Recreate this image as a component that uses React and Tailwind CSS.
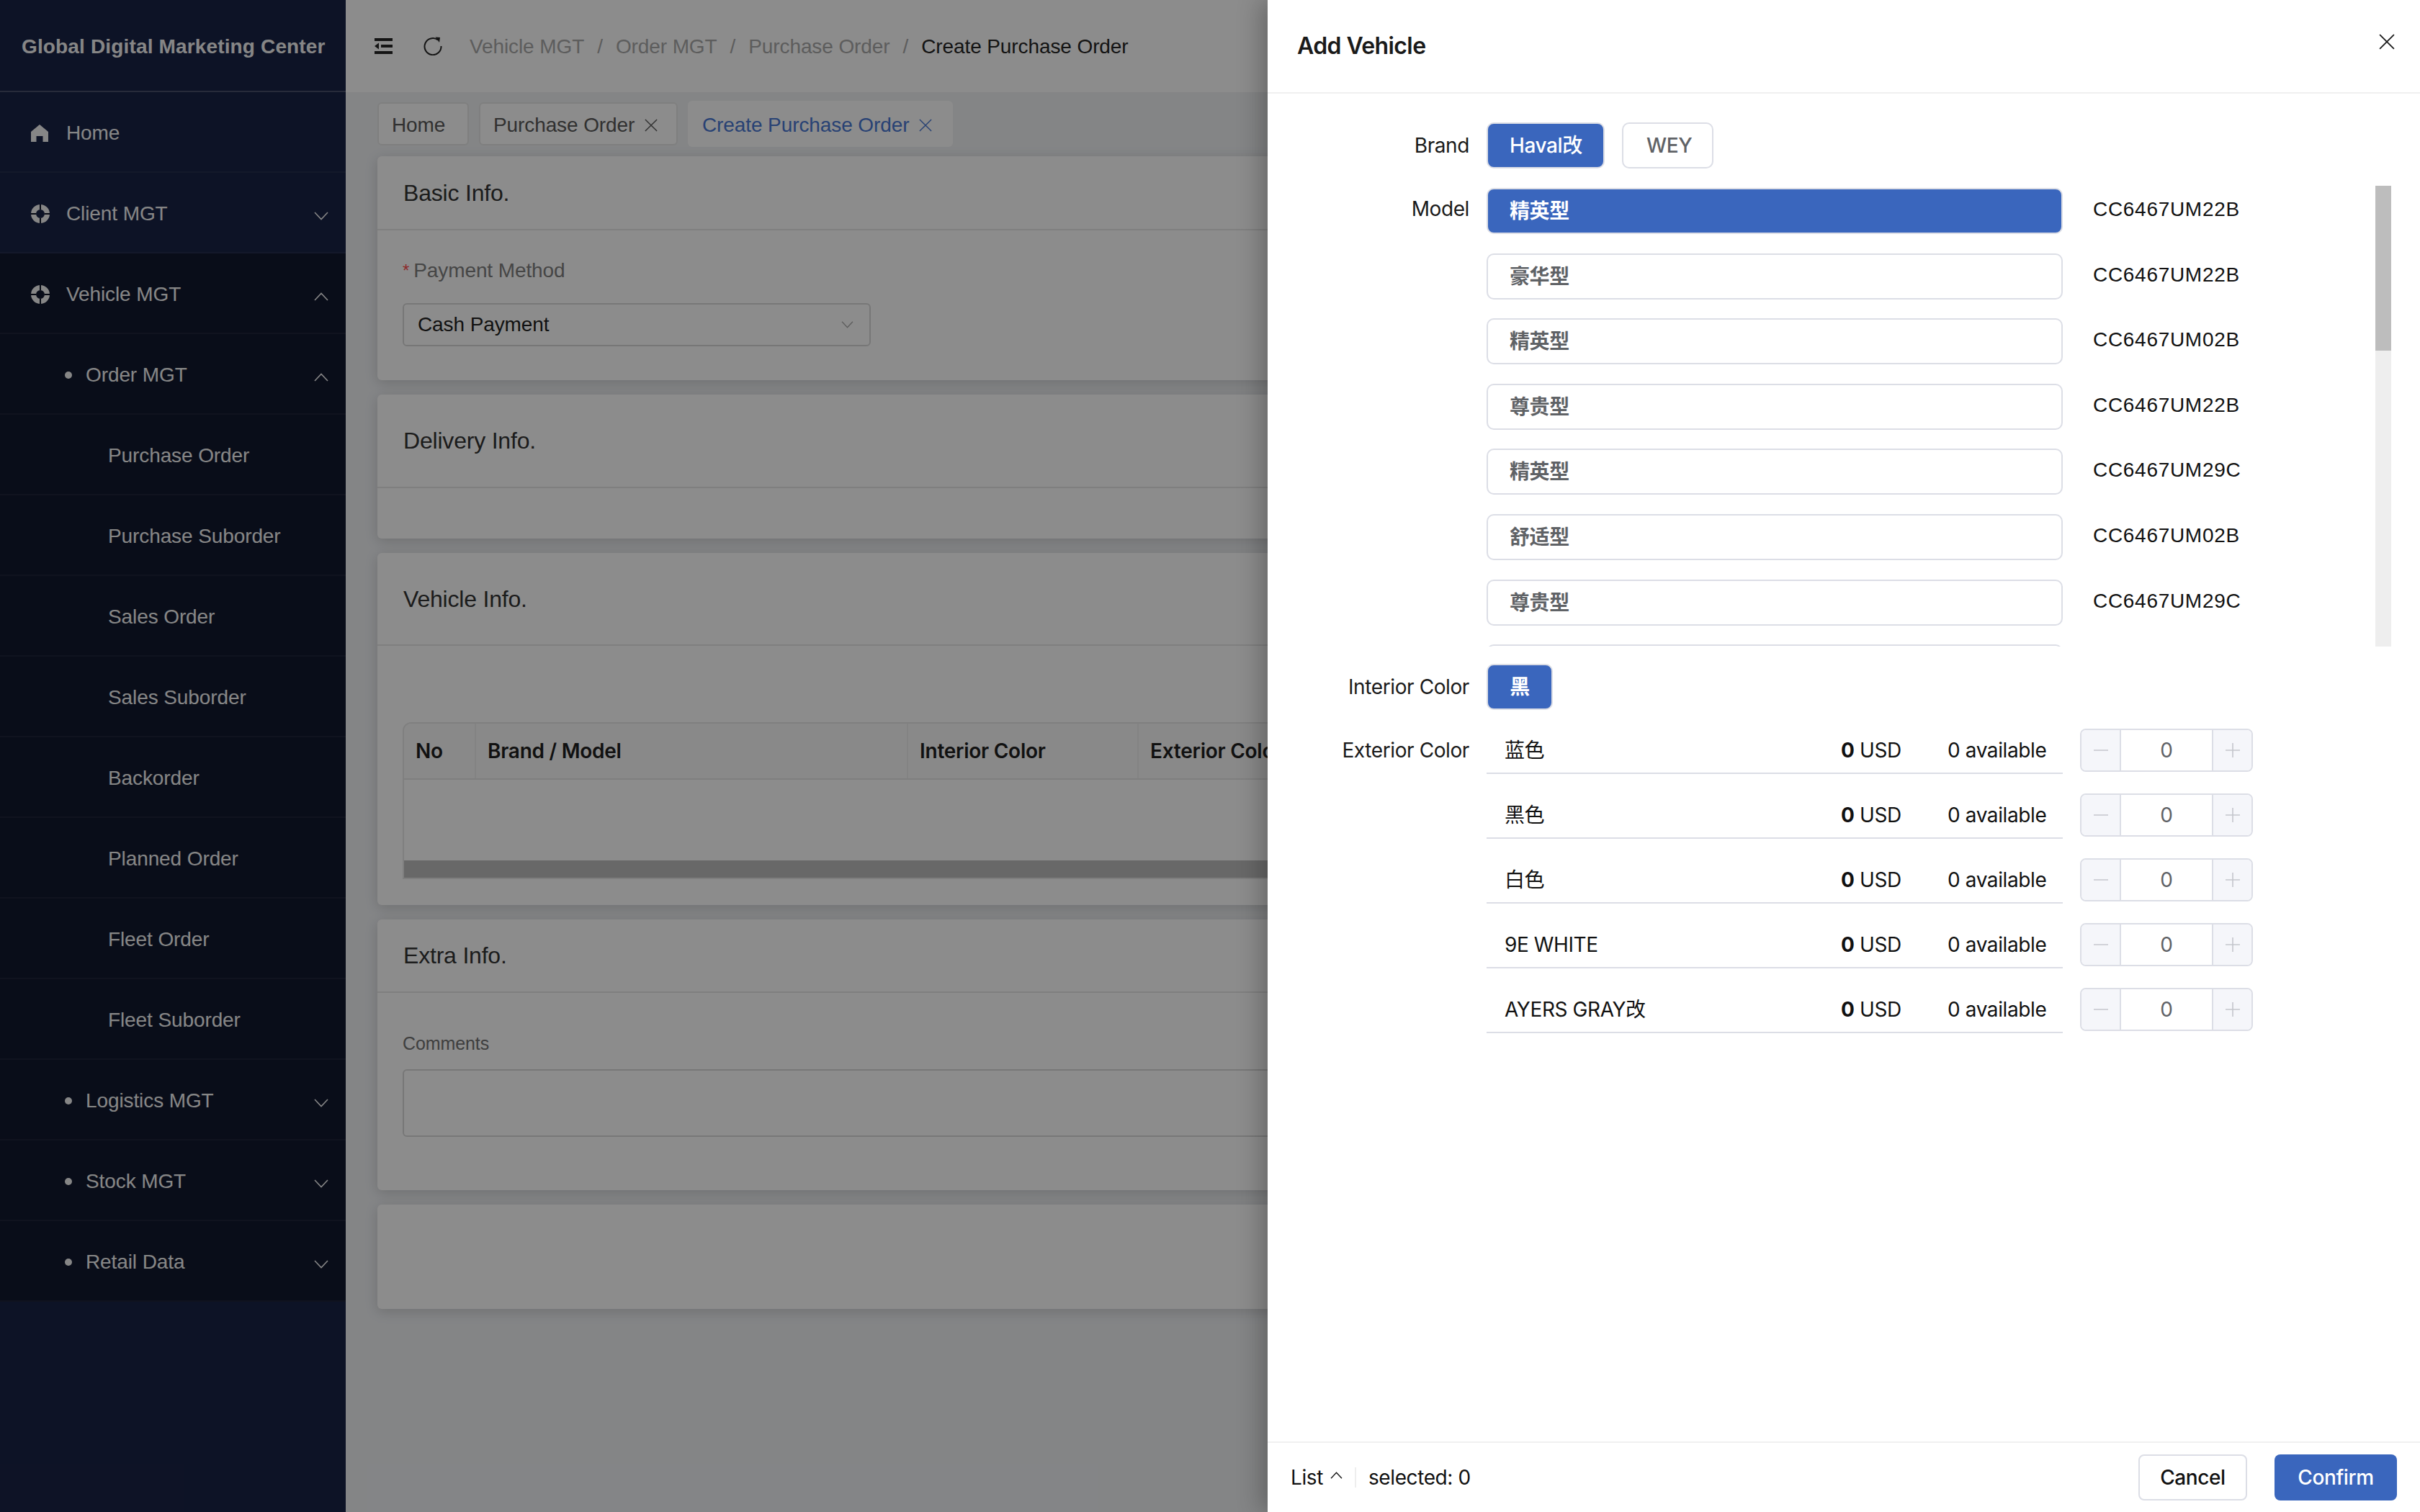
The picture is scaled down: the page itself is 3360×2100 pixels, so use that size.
const sans = 'font-["Liberation_Sans","Noto_Sans_CJK_SC",sans-serif]'
const inter = 'font-["Inter","Noto_Sans_CJK_SC",sans-serif]'

const subItems = [
  'Purchase Order',
  'Purchase Suborder',
  'Sales Order',
  'Sales Suborder',
  'Backorder',
  'Planned Order',
  'Fleet Order',
  'Fleet Suborder',
]

const models = [
  ['精英型', 'CC6467UM22B'],
  ['豪华型', 'CC6467UM22B'],
  ['精英型', 'CC6467UM02B'],
  ['尊贵型', 'CC6467UM22B'],
  ['精英型', 'CC6467UM29C'],
  ['舒适型', 'CC6467UM02B'],
  ['尊贵型', 'CC6467UM29C'],
]

const colors = ['蓝色', '黑色', '白色', '9E WHITE', 'AYERS GRAY改']

function Chevron({ up, className = 'w-[20px] h-[12px]' }) {
  return (
    <svg viewBox="0 0 20 12" className={className} fill="none" stroke="currentColor" strokeWidth="1.6">
      <path d={up ? 'M1 11 L10 1.5 L19 11' : 'M1 1 L10 10.5 L19 1'} />
    </svg>
  )
}

function Cross({ className }) {
  return (
    <svg viewBox="0 0 20 20" className={className} fill="none" stroke="currentColor" strokeWidth="1.6">
      <path d="M1 1 L19 19 M19 1 L1 19" />
    </svg>
  )
}

function HomeIcon() {
  return (
    <svg viewBox="0 0 24 24" className="w-[24px] h-[24px]" fill="currentColor">
      <path fillRule="evenodd" d="M12 0 L24 10 V24 H16.5 V16 H7.5 V24 H0 V10 Z" />
    </svg>
  )
}

function TargetIcon() {
  return (
    <svg viewBox="0 0 26 26" className="w-[26px] h-[26px]" fill="none" stroke="currentColor">
      <circle cx="13" cy="13" r="9.5" strokeWidth="7" />
      <path d="M13 0 V7 M13 19 V26 M0 13 H7 M19 13 H26" stroke="#0e1326" strokeWidth="2" />
    </svg>
  )
}

function MenuRow({ label, icon, chevron, dot, sub, dark }) {
  return (
    <div
      className={`flex items-center h-[112px] pt-[3px] border-b-2 border-white/5 text-[28px] tracking-[-0.1px] text-[#f5f5f5] ${sans} ${
        dark ? 'bg-[#12182f]' : 'bg-[#192345]'
      } ${sub ? 'pl-[150px]' : dot ? 'pl-[90px]' : 'pl-[43px]'}`}
    >
      {icon && <span className="w-[49px] flex items-center">{icon}</span>}
      {dot && <span className="w-[10px] h-[10px] rounded-full bg-[#f5f5f5] mr-[19px]" />}
      <span className="flex-1">{label}</span>
      {chevron && (
        <span className="mr-[24px] mt-[6px]">
          <Chevron up={chevron === 'up'} />
        </span>
      )}
    </div>
  )
}

function Sidebar() {
  return (
    <aside className="w-[480px] h-full shrink-0 bg-[#192345]">
      <div className={`h-[128px] flex items-center pl-[30px] pt-[3px] border-b-2 border-white/20 text-[28px] font-bold tracking-[0.15px] text-[#f5f5f5] ${sans}`}>
        Global Digital Marketing Center
      </div>
      <MenuRow label="Home" icon={<HomeIcon />} />
      <MenuRow label="Client MGT" icon={<TargetIcon />} chevron="down" />
      <MenuRow label="Vehicle MGT" icon={<TargetIcon />} chevron="up" dark />
      <MenuRow label="Order MGT" dot chevron="up" dark />
      {subItems.map((s) => (
        <MenuRow key={s} label={s} sub dark />
      ))}
      <MenuRow label="Logistics MGT" dot chevron="down" dark />
      <MenuRow label="Stock MGT" dot chevron="down" dark />
      <MenuRow label="Retail Data" dot chevron="down" dark />
    </aside>
  )
}

function TopBar() {
  return (
    <div className={`h-[128px] bg-white flex items-center pl-[40px] text-[28px] tracking-[-0.1px] ${sans}`}>
      <svg viewBox="0 0 25 22" className="w-[25px] h-[22px] text-[#262626]" fill="currentColor">
        <path d="M0 0 H25 V4 H0 Z M9 9 H25 V13 H9 Z M0 18 H25 V22 H0 Z M6 6.5 V15.5 L0 11 Z" />
      </svg>
      <svg viewBox="0 0 26 26" className="w-[26px] h-[26px] ml-[43px] text-[#262626]" fill="none" stroke="currentColor" strokeWidth="2">
        <path d="M20 4.5 A11.5 11.5 0 1 0 24.5 13" />
        <path d="M16.5 0.5 L23 1 L22 8 Z" fill="currentColor" stroke="none" />
      </svg>
      <div className="flex items-center ml-[38px] pt-[1px] text-[#aaaaaa]">
        <span>Vehicle MGT</span>
        <span className="mx-[18px]">/</span>
        <span>Order MGT</span>
        <span className="mx-[18px]">/</span>
        <span>Purchase Order</span>
        <span className="mx-[18px]">/</span>
        <span className="text-[#262626]">Create Purchase Order</span>
      </div>
    </div>
  )
}

function Tabs() {
  return (
    <div className={`h-[64px] mt-[12px] flex items-center gap-[14px] text-[28px] tracking-[-0.1px] text-[#595959] ${sans}`}>
      <div className="h-[60px] w-[127px] pl-[18px] pt-[3px] flex items-center bg-white border-2 border-[#e8e8e8] rounded-[6px]">Home</div>
      <div className="h-[60px] w-[276px] pl-[18px] pt-[3px] flex items-center bg-white border-2 border-[#e8e8e8] rounded-[6px]">
        Purchase Order
        <Cross className="w-[18px] h-[18px] ml-[14px]" />
      </div>
      <div className="h-[64px] w-[368px] pl-[20px] pt-[3px] flex items-center bg-white rounded-[6px] text-[#4a78d4]">
        Create Purchase Order
        <Cross className="w-[18px] h-[18px] ml-[14px]" />
      </div>
    </div>
  )
}

function Card({ title, height, headerHeight, children }) {
  return (
    <section className={`bg-white rounded-[6px] shadow-[0_4px_18px_rgba(0,0,0,0.16)] ${height}`}>
      {title && (
        <div className={`flex items-center pl-[36px] border-b-2 border-[#e8e8e8] text-[32px] tracking-[-0.2px] text-[#333333] ${headerHeight} ${sans}`}>
          {title}
        </div>
      )}
      {children}
    </section>
  )
}

function Main() {
  const heads = [
    ['No', 'w-[100px]'],
    ['Brand / Model', 'w-[600px]'],
    ['Interior Color', 'w-[320px]'],
    ['Exterior Color', 'w-[320px]'],
    ['', 'flex-1'],
  ]
  return (
    <main className="flex-1 h-full bg-[#f0f2f5] overflow-hidden">
      <TopBar />
      <div className="px-[44px]">
        <Tabs />
        <div className="mt-[13px] flex flex-col gap-[20px]">
          <Card title="Basic Info." height="h-[311px]" headerHeight="h-[103px]">
            <div className={`pl-[35px] pt-[41px] text-[28px] tracking-[-0.1px] ${sans}`}>
              <div className="h-[30px] flex items-center text-[#808080]">
                <span className="text-[#ff4d4f] text-[24px] mr-[6px]">*</span>
                Payment Method
              </div>
              <div className="w-[650px] h-[60px] mt-[30px] pl-[19px] pr-[22px] flex items-center justify-between border-2 border-[#d9d9d9] rounded-[6px] text-[#1f1f1f]">
                Cash Payment
                <Chevron className="w-[17px] h-[10px] text-[#aaaaaa]" />
              </div>
            </div>
          </Card>
          <Card title="Delivery Info." height="h-[200px]" headerHeight="h-[130px]" />
          <Card title="Vehicle Info." height="h-[489px]" headerHeight="h-[129px]">
            <div className="ml-[35px] mt-[106px] h-[218px] flex flex-col border-2 border-[#e8e8e8] rounded-tl-[12px] overflow-hidden">
              <div className={`h-[78px] shrink-0 flex bg-[#fafafa] border-b-2 border-[#e8e8e8] text-[28px] font-semibold tracking-[-0.25px] text-[#1f1f1f] ${inter}`}>
                {heads.map(([h, w], i) => (
                  <div key={i} className={`${w} pl-[16px] flex items-center border-r-2 border-[#eeeeee]`}>
                    {h}
                  </div>
                ))}
              </div>
              <div className="flex-1" />
              <div className="h-[24px] shrink-0 bg-[#bdbdbd]" />
            </div>
          </Card>
          <Card title="Extra Info." height="h-[376px]" headerHeight="h-[102px]">
            <div className={`pl-[35px] pt-[56px] text-[25px] tracking-[-0.1px] text-[#737373] ${sans}`}>
              <div className="h-[30px] flex items-center">Comments</div>
              <div className="h-[94px] mt-[20px] border-2 border-[#d9d9d9] rounded-[6px]" />
            </div>
          </Card>
          <Card height="h-[145px]" />
        </div>
      </div>
    </main>
  )
}

function OptionButton({ children, active, className }) {
  return (
    <div
      className={`h-[64px] flex items-center text-[28px] font-medium border-2 border-[#dcdee6] rounded-[10px] ${
        active ? 'bg-[#3a66bd] text-white' : 'bg-white text-[#5f6266]'
      } ${className}`}
    >
      {children}
    </div>
  )
}

function FormRow({ label, children, className = '' }) {
  return (
    <div className={`flex ${className}`}>
      <div className="w-[280px] shrink-0 h-[64px] flex items-center justify-end text-[28px] text-[#1a1a1a]">{label}</div>
      <div className="ml-[24px] flex-1 min-w-0">{children}</div>
    </div>
  )
}

function Stepper() {
  return (
    <div className="ml-[24px] mt-[2px] w-[240px] h-[60px] flex border-2 border-[#dcdee6] rounded-[8px] overflow-hidden text-[#c4c6cc]">
      <div className="w-[55px] flex items-center justify-center bg-[#f5f6fa] border-r-2 border-[#dcdee6]">
        <svg viewBox="0 0 20 20" className="w-[20px] h-[20px]" stroke="currentColor" strokeWidth="1.6">
          <path d="M0 10 H20" />
        </svg>
      </div>
      <div className="flex-1 flex items-center justify-center text-[28px] text-[#5f6266]">0</div>
      <div className="w-[55px] flex items-center justify-center bg-[#f5f6fa] border-l-2 border-[#dcdee6]">
        <svg viewBox="0 0 20 20" className="w-[20px] h-[20px]" stroke="currentColor" strokeWidth="1.6">
          <path d="M0 10 H20 M10 0 V20" />
        </svg>
      </div>
    </div>
  )
}

function Drawer() {
  return (
    <div className={`absolute top-0 right-0 w-[1600px] h-full flex flex-col bg-white tracking-[-0.4px] shadow-[-8px_0_32px_rgba(0,0,0,0.28)] ${inter}`}>
      <header className="h-[130px] shrink-0 flex items-center justify-between pl-[41px] pr-[35px] border-b-2 border-[#f0f0f0]">
        <span className="text-[32px] font-semibold tracking-[-0.6px] text-[#1a1a1a]">Add Vehicle</span>
        <Cross className="w-[22px] h-[22px] text-[#1a1a1a] mb-[12px]" />
      </header>

      <div className="flex-1 min-h-0 pt-[40px] pr-[40px]">
        <FormRow label="Brand">
          <div className="flex gap-[24px]">
            <OptionButton active className="w-[164px] pl-[30px]">Haval改</OptionButton>
            <OptionButton className="w-[127px] pl-[32px]">WEY</OptionButton>
          </div>
        </FormRow>

        <FormRow label="Model" className="mt-[24px]">
          <div className="flex h-[640px]">
            <div className="flex-1 overflow-hidden pt-[3px] flex flex-col gap-[26.6px]">
              {models.map(([name, code], i) => (
                <div key={i} className="flex items-center shrink-0">
                  <OptionButton active={i === 0} className="w-[800px] pl-[30px] shrink-0 font-semibold">{name}</OptionButton>
                  <span className={`ml-[42px] mb-[4px] text-[28px] tracking-[0.7px] text-[#111111] ${sans}`}>{code}</span>
                </div>
              ))}
              <OptionButton className="w-[800px] shrink-0" />
            </div>
            <div className="w-[22px] shrink-0 bg-[#eeeeee]">
              <div className="h-[229px] bg-[#bdbdbd]" />
            </div>
          </div>
        </FormRow>

        <FormRow label="Interior Color" className="mt-[24px]">
          <OptionButton active className="w-[92px] justify-center font-semibold">黑</OptionButton>
        </FormRow>

        <FormRow label="Exterior Color" className="mt-[24px]">
          <div className="flex flex-col gap-[25px]">
            {colors.map((c) => (
              <div key={c} className="flex">
                <div className="w-[800px] h-[65px] pl-[25px] flex items-center border-b-2 border-[#dcdee6] text-[28px] text-[#111111]">
                  <span className="flex-1">{c}</span>
                  <span className="w-[148px]">
                    <b className="font-bold">0</b> USD
                  </span>
                  <span className="w-[160px]">0 available</span>
                </div>
                <Stepper />
              </div>
            ))}
          </div>
        </FormRow>
      </div>

      <footer className="h-[98px] shrink-0 flex items-center justify-between px-[32px] border-t-2 border-[#f0f0f0] text-[28px] text-[#111111]">
        <div className="flex items-center">
          <span>List</span>
          <Chevron up className="w-[17px] h-[10px] ml-[10px] mb-[6px]" />
          <span className="w-[2px] h-[28px] bg-[#eeeeee] ml-[17px] mr-[17px]" />
          <span>selected: 0</span>
        </div>
        <div className="flex items-center gap-[38px] font-medium">
          <div className="w-[151px] h-[64px] flex items-center justify-center border-2 border-[#dcdee6] rounded-[8px]">Cancel</div>
          <div className="w-[170px] h-[64px] flex items-center justify-center bg-[#3a66bd] text-white rounded-[8px]">Confirm</div>
        </div>
      </footer>
    </div>
  )
}

export default function App() {
  return (
    <div className="relative w-[3360px] h-[2100px] overflow-hidden flex">
      <Sidebar />
      <Main />
      <div className="absolute inset-0 bg-black/45" />
      <Drawer />
    </div>
  )
}
